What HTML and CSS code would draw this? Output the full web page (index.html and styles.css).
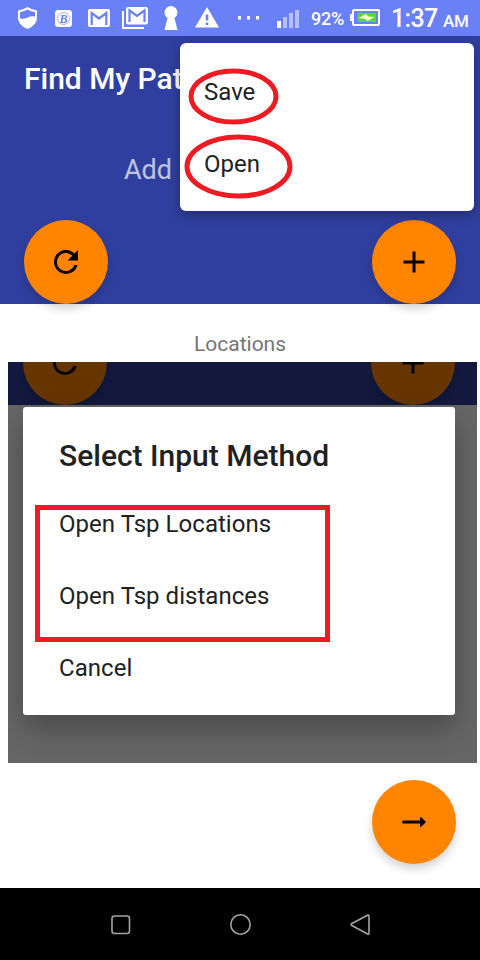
FILE: index.html
```html
<!DOCTYPE html>
<html lang="en">
<head>
<meta charset="utf-8">
<title>Find My Path</title>
<link rel="stylesheet" href="styles.css">
</head>
<body>
<div class="phone">
  <header class="status">
    <svg class="shield" width="20" height="24" viewBox="18 6 20 24"><path fill="#fff" d="M27.500 7Q32 10 37 10.500V18Q37 25 27.500 29Q18 25 18 18V10.500Q23 10 27.500 7Z"/><path fill="#6a80f6" d="M20 12Q24 11.500 27.500 9.500Q31 11.500 35 12V16.500Q31 15.500 27.500 17.500Q24 19.500 20 18.500Z"/></svg>
    <svg class="bold-app" width="18" height="18" viewBox="0 0 18 18"><rect width="17" height="17" rx="3" fill="#fff"/><circle cx="8.500" cy="8.500" r="6" fill="none" stroke="#8e9ff8" stroke-width=".8"/><text class="bold-letter" x="8.500" y="12.500" text-anchor="middle">B</text></svg>
    <svg class="mail" width="22" height="18" viewBox="0 0 22 18"><rect width="22" height="18" rx="2" fill="#fff"/><path d="M3.700 16V4L11 9.500L18.300 4V16" fill="none" stroke="#6a80f6" stroke-width="2.200"/></svg>
    <svg class="mails" width="26" height="22" viewBox="0 0 26 22"><path d="M1 4V21H22" fill="none" stroke="#fff" stroke-width="2"/><rect x="4" width="22" height="17.500" rx="2" fill="#fff"/><path d="M7.500 15V3.500L15 9L22.500 3.500V15" fill="none" stroke="#6a80f6" stroke-width="2.200"/></svg>
    <svg class="keyhole" width="14" height="24" viewBox="0 0 14 24"><circle cx="7" cy="6.500" r="6.500" fill="#fff"/><path d="M4 10H10L13.500 24H.5Z" fill="#fff"/></svg>
    <svg class="warning" width="24" height="21" viewBox="0 0 24 21"><path d="M12 0L24 20.500H0Z" fill="#fff"/><path d="M12 7.500V13.500M12 15.500V18" stroke="#6a80f6" stroke-width="2.600"/></svg>
    <svg class="dots" width="22" height="4" viewBox="0 0 22 4"><path d="M0 0h3v3.500H0zM9 0h3v3.500H9zM18 0h3v3.500h-3z" fill="#fff"/></svg>
    <svg class="signal" width="23" height="18" viewBox="0 0 23 18"><path d="M0 11h4v7H0z" fill="#fff"/><path d="M6 7h4v11H6zM12 3h4v15h-4zM18 0h4v18h-4z" fill="#b5c0fb"/></svg>
    <span class="percent">92%</span>
    <svg class="battery" width="30" height="17" viewBox="0 0 30 17"><rect y="5" width="3" height="7" fill="#fff"/><rect x="3" y="1" width="26" height="15" rx="1" fill="none" stroke="#fff" stroke-width="2"/><rect x="7.500" y="4" width="18.500" height="9" fill="#58d63c"/><path d="M8.500 9L16 5L18 7.500L24.500 8L17.500 12L15 9.800Z" fill="#fff"/></svg>
    <span class="clock">1:37</span><span class="ampm">AM</span>
  </header>

  <section class="hero">
    <h1 class="app-title">Find My Pat</h1>
    <div class="hint">Add</div>
    <div class="actions">
      <button class="fab"><svg width="24" height="24" viewBox="0 0 24 24"><path d="M20.500 3.500A12 12 0 1 0 23.600 15H20.400A9 9 0 1 1 18.300 5.700L13.500 10.500H24V0Z"/></svg></button>
      <button class="fab"><svg width="22" height="22" viewBox="0 0 22 22"><path d="M9.500 .5h3v9h9v3h-9v9h-3v-9h-9v-3h9z"/></svg></button>
    </div>
    <nav class="menu">
      <div class="menu-item">Save</div>
      <div class="menu-item">Open</div>
    </nav>
    <svg class="rings" width="110" height="134" viewBox="184 66 110 134"><ellipse cx="233.500" cy="96.500" rx="42.500" ry="25.500"/><ellipse cx="238.500" cy="166.500" rx="51.500" ry="29.500"/></svg>
  </section>

  <main class="content">
    <div class="locations">Locations</div>
    <section class="preview">
      <div class="preview-bar">
        <div class="fab dim"><svg width="24" height="24" viewBox="0 0 24 24"><path d="M20.500 3.500A12 12 0 1 0 23.600 15H20.400A9 9 0 1 1 18.300 5.700L13.500 10.500H24V0Z"/></svg></div>
        <div class="fab dim"><svg width="22" height="22" viewBox="0 0 22 22"><path d="M9.500 .5h3v9h9v3h-9v9h-3v-9h-9v-3h9z"/></svg></div>
      </div>
      <div class="dialog">
        <h2 class="dialog-title">Select Input Method</h2>
        <div class="option">Open Tsp Locations</div>
        <div class="option">Open Tsp distances</div>
        <div class="option">Cancel</div>
        <div class="box-mark"></div>
      </div>
    </section>
    <div class="next-row">
      <button class="fab"><svg width="24" height="10" viewBox="0 0 24 10"><path d="M1.500 3.500H18V.5Q18.500-.2 19.500 .5L23.500 4.500Q24 5 23.500 5.500L19.500 9.500Q18.500 10.200 18 9.500V6.500H1.500Q0 6.500 0 5T1.500 3.500Z"/></svg></button>
    </div>
  </main>

  <footer class="navbar">
    <svg width="20" height="20" viewBox="0 0 20 20"><rect x="1" y="1" width="17.500" height="17.500" rx="2.500"/></svg>
    <svg width="22" height="22" viewBox="0 0 22 22"><circle cx="10.500" cy="10.500" r="9.700"/></svg>
    <svg width="21" height="22" viewBox="0 0 21 22"><path d="M17.500 1.200L1.500 9.700Q.7 10.500 1.500 11.300L17.500 20Q19 20.500 19 19V2Q19 .7 17.500 1.200Z"/></svg>
  </footer>
</div>
</body>
</html>
```
FILE: styles.css
```css
* { box-sizing: border-box; }
body { margin: 0; background: #fff; font-family: Roboto, "Liberation Sans", sans-serif; color: #212121; }
.phone { width: 480px; height: 960px; display: flex; flex-direction: column; overflow: hidden; }
svg { display: block; flex: none; }

.status { height: 36px; flex: none; background: #6a80f6; color: #fff; display: flex; align-items: flex-start; white-space: nowrap; font-weight: 500; }
.shield { margin: 6px 0 0 18px; }
.bold-app { margin: 10px 0 0 17px; }
.bold-letter { font: italic bold 12px "Liberation Serif", serif; fill: #6a80f6; }
.mail { margin: 9px 0 0 15px; }
.mails { margin: 7px 0 0 12px; }
.keyhole { margin: 6px 0 0 16px; }
.warning { margin: 7px 0 0 17px; }
.dots { margin: 16px 0 0 19px; }
.signal { margin: 10px 0 0 17px; }
.percent { width: 39px; margin-left: 11px; font-size: 18px; line-height: 38px; letter-spacing: -.2px; }
.battery { margin-top: 9px; }
.clock { width: 52px; margin-left: 11px; font-size: 25px; line-height: 38px; letter-spacing: -.7px; }
.ampm { font-size: 17px; line-height: 43px; letter-spacing: -.3px; }

.hero { height: 268px; flex: none; position: relative; background: #303f9f; display: flex; flex-direction: column; }
.app-title { margin: 25px 0 0 24px; font-size: 30px; line-height: 36px; font-weight: 500; color: #fff; }
.hint { margin: 57px 0 0 124px; font-size: 27px; line-height: 32px; color: rgba(255, 255, 255, .7); }
.actions { margin-top: auto; padding: 0 24px; display: flex; justify-content: space-between; }
.fab { width: 84px; height: 84px; flex: none; border: 0; padding: 0; border-radius: 50%; background: #ff8400; display: flex; align-items: center; justify-content: center; box-shadow: 0 5px 10px rgba(0, 0, 0, .18); }
.menu { position: absolute; left: 180px; top: 7px; width: 294px; height: 168px; padding: 12px 24px; background: #fff; border-radius: 6px; box-shadow: 0 4px 12px rgba(0, 0, 0, .3); }
.menu-item { height: 72px; font-size: 24px; line-height: 74px; }
.rings { position: absolute; left: 184px; top: 30px; fill: none; stroke: #ed1c24; stroke-width: 5px; }

.content { flex: 1; display: flex; flex-direction: column; }
.locations { height: 58px; padding-top: 27px; text-align: center; font-size: 21px; line-height: 26px; color: #757575; }
.preview { width: 469px; height: 401px; flex: none; margin-left: 8px; background: #666; overflow: hidden; }
.preview-bar { height: 43px; padding: 0 22px 0 15px; background: #13193f; display: flex; justify-content: space-between; align-items: flex-end; overflow: hidden; }
.dim { background: #663500; }
.dialog { position: relative; width: 432px; height: 308px; margin: 2px 0 0 15px; padding: 27px 36px 0; background: #fff; border-radius: 3px; box-shadow: 0 14px 28px rgba(0, 0, 0, .28); }
.dialog-title { margin: 0 0 19px; font-size: 30px; line-height: 44px; font-weight: 500; }
.option { height: 72px; font-size: 24px; line-height: 54px; letter-spacing: .04px; }
.box-mark { position: absolute; left: 12px; top: 98px; width: 295px; height: 137px; border: 5px solid #ed1c24; }
.next-row { display: flex; justify-content: flex-end; padding: 17px 24px 0; }

.navbar { height: 72px; flex: none; background: #000; display: flex; align-items: center; padding: 2px 109px 0 111px; justify-content: space-between; }
.navbar svg { fill: none; stroke: #a3a3a3; stroke-width: 1.600px; }
```
